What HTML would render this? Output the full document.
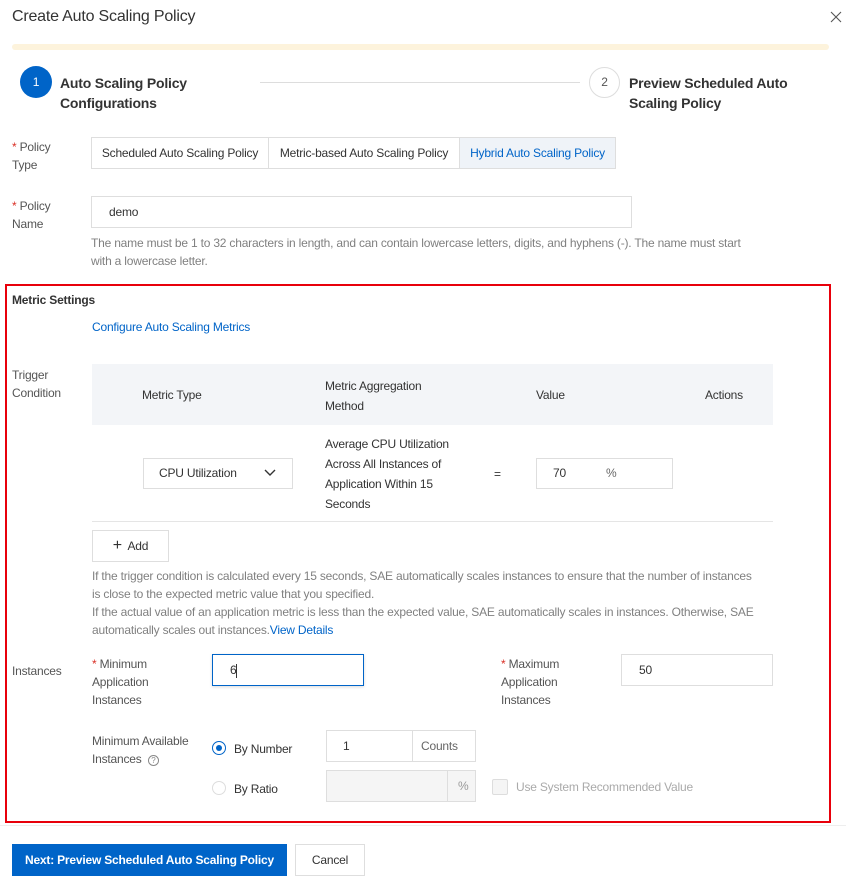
<!DOCTYPE html>
<html><head><meta charset="utf-8"><style>
*{box-sizing:border-box;margin:0;padding:0}
body{width:846px;height:882px;background:#fff;font-family:"Liberation Sans",sans-serif;font-size:12px;color:#333;position:relative;overflow:hidden;letter-spacing:-0.2px}
.a{position:absolute;white-space:nowrap}
.lbl{color:#555;line-height:18px}
.req{color:#d93026}
.box{position:absolute;border:1px solid #dedede;background:#fff}
.blue{color:#0064c8}
.gray{color:#808080}
</style></head><body>
<div class="a" style="left:12px;top:8px;font-size:16px;color:#333">Create Auto Scaling Policy</div>
<svg class="a" style="left:830px;top:11px" width="12" height="12"><path d="M1 1l10 10M11 1L1 11" stroke="#555" stroke-width="1.1"/></svg>
<div class="a" style="left:12px;top:44px;width:817px;height:6px;background:#fdf3dc;border-radius:3px"></div>
<div class="a" style="left:20px;top:66px;width:32px;height:32px;border-radius:50%;background:#0064c8;color:#fff;text-align:center;line-height:32px">1</div>
<div class="a" style="left:60px;top:73px;font-size:14px;font-weight:bold;line-height:20px;color:#333">Auto Scaling Policy<br>Configurations</div>
<div class="a" style="left:260px;top:82px;width:320px;height:1px;background:#ddd"></div>
<div class="a" style="left:589px;top:67px;width:31px;height:31px;border-radius:50%;border:1px solid #ddd;color:#555;text-align:center;line-height:29px">2</div>
<div class="a" style="left:629px;top:73px;font-size:14px;font-weight:bold;line-height:20px;color:#333">Preview Scheduled Auto<br>Scaling Policy</div>

<div class="a lbl" style="left:12px;top:138px"><span class="req">*</span> Policy<br>Type</div>
<div class="box" style="left:91px;top:137px;width:525px;height:32px;display:flex">
 <div style="width:177px;border-right:1px solid #dedede;line-height:30px;text-align:center">Scheduled Auto Scaling Policy</div>
 <div style="width:191px;border-right:1px solid #dedede;line-height:30px;text-align:center">Metric-based Auto Scaling Policy</div>
 <div style="flex:1;background:#eff3f8;line-height:30px;text-align:center;color:#0064c8">Hybrid Auto Scaling Policy</div>
</div>
<div class="a lbl" style="left:12px;top:197px"><span class="req">*</span> Policy<br>Name</div>
<div class="box" style="left:91px;top:196px;width:541px;height:32px;padding-left:17px;line-height:30px">demo</div>
<div class="a gray" style="left:91px;top:234px;line-height:18px">The name must be 1 to 32 characters in length, and can contain lowercase letters, digits, and hyphens (-). The name must start<br>with a lowercase letter.</div>

<div class="a" style="left:5px;top:284px;width:826px;height:539px;border:2px solid #e8000b"></div>
<div class="a" style="left:12px;top:293px;font-weight:bold;color:#333">Metric Settings</div>
<div class="a blue" style="left:92px;top:320px">Configure Auto Scaling Metrics</div>
<div class="a lbl" style="left:12px;top:366px">Trigger<br>Condition</div>
<div class="a" style="left:92px;top:364px;width:681px;height:61px;background:#f3f5f8"></div>
<div class="a" style="left:142px;top:388px;color:#333">Metric Type</div>
<div class="a" style="left:325px;top:376px;line-height:20px;color:#333">Metric Aggregation<br>Method</div>
<div class="a" style="left:536px;top:388px;color:#333">Value</div>
<div class="a" style="left:705px;top:388px;color:#333">Actions</div>
<div class="box" style="left:143px;top:458px;width:150px;height:31px;padding-left:15px;line-height:29px">CPU Utilization<svg style="position:absolute;right:16px;top:10px" width="12" height="8"><path d="M1 1l5 5 5-5" stroke="#333" stroke-width="1.4" fill="none"/></svg></div>
<div class="a" style="left:325px;top:434px;line-height:20px;color:#333">Average CPU Utilization<br>Across All Instances of<br>Application Within 15<br>Seconds</div>
<div class="a" style="left:494px;top:467px">=</div>
<div class="box" style="left:536px;top:458px;width:137px;height:31px;line-height:29px;padding-left:16px">70<span style="position:absolute;left:69px;color:#666">%</span></div>
<div class="a" style="left:92px;top:521px;width:681px;height:1px;background:#e5e5e5"></div>
<div class="box" style="left:92px;top:530px;width:77px;height:32px;line-height:30px;text-align:center;color:#333"><span style="font-size:16px">+</span>&nbsp; Add</div>
<div class="a gray" style="left:92px;top:567px;line-height:18px">If the trigger condition is calculated every 15 seconds, SAE automatically scales instances to ensure that the number of instances<br>is close to the expected metric value that you specified.<br>If the actual value of an application metric is less than the expected value, SAE automatically scales in instances. Otherwise, SAE<br>automatically scales out instances.<span class="blue">View Details</span></div>

<div class="a lbl" style="left:12px;top:662px">Instances</div>
<div class="a lbl" style="left:92px;top:655px"><span class="req">*</span> Minimum<br>Application<br>Instances</div>
<div class="box" style="left:212px;top:654px;width:152px;height:32px;border-color:#0064c8;line-height:30px;padding-left:17px;box-shadow:0 1px 3px rgba(0,0,0,.15)">6<span style="display:inline-block;width:1px;height:14px;background:#333;vertical-align:middle"></span></div>
<div class="a lbl" style="left:501px;top:655px"><span class="req">*</span> Maximum<br>Application<br>Instances</div>
<div class="box" style="left:621px;top:654px;width:152px;height:32px;line-height:30px;padding-left:17px">50</div>
<div class="a lbl" style="left:92px;top:732px">Minimum Available<br>Instances &nbsp;<span style="display:inline-block;width:11px;height:11px;border:1px solid #888;border-radius:50%;font-size:8px;line-height:9px;text-align:center;color:#888">?</span></div>
<div class="a" style="left:212px;top:741px;width:14px;height:14px;border-radius:50%;border:1px solid #0064c8"><div style="margin:3px;width:6px;height:6px;border-radius:50%;background:#0064c8"></div></div>
<div class="a" style="left:234px;top:742px">By Number</div>
<div class="box" style="left:326px;top:730px;width:150px;height:32px;line-height:30px;padding-left:16px">1<span style="position:absolute;left:85px;top:0;height:30px;border-left:1px solid #dedede;padding-left:8px;color:#666">Counts</span></div>
<div class="a" style="left:212px;top:781px;width:14px;height:14px;border-radius:50%;border:1px solid #ddd"></div>
<div class="a" style="left:234px;top:782px">By Ratio</div>
<div class="box" style="left:326px;top:770px;width:150px;height:32px;background:#f5f5f5"><span style="position:absolute;left:120px;top:0;height:30px;line-height:30px;border-left:1px solid #dedede;padding-left:10px;color:#999">%</span></div>
<div class="a" style="left:492px;top:779px;width:16px;height:16px;border:1px solid #ddd;background:#f5f5f5;border-radius:2px"></div>
<div class="a" style="left:516px;top:780px;color:#aaa">Use System Recommended Value</div>

<div class="a" style="left:0;top:825px;width:846px;height:1px;background:#eee"></div>
<div class="a" style="left:12px;top:844px;width:275px;height:32px;background:#0064c8;color:#fff;font-weight:bold;line-height:32px;text-align:center">Next: Preview Scheduled Auto Scaling Policy</div>
<div class="box" style="left:295px;top:844px;width:70px;height:32px;line-height:30px;text-align:center;color:#333">Cancel</div>
</body></html>
